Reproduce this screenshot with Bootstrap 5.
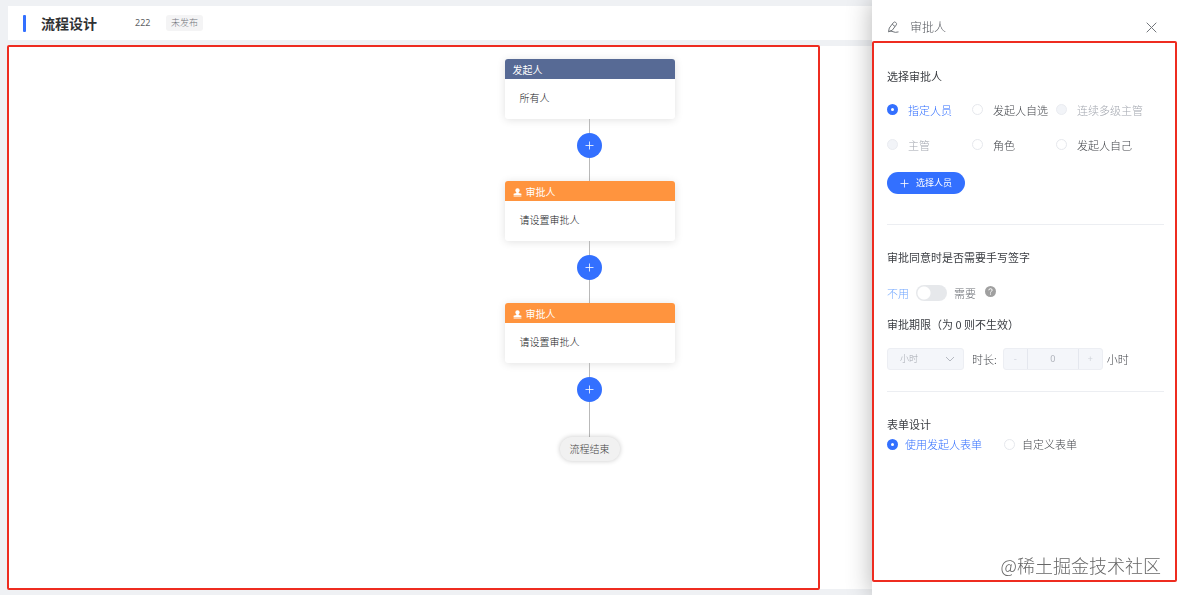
<!DOCTYPE html>
<html lang="zh-CN">
<head>
<meta charset="utf-8">
<meta name="viewport" content="width=device-width, initial-scale=1">
<title>流程设计</title>
<link rel="stylesheet" href="https://cdn.jsdelivr.net/npm/bootstrap@5.3.0/dist/css/bootstrap.min.css">
<style>
  :root { --brand: #3370ff; --mark-red: #ee2c20; }
  body { font-family: "Noto Sans CJK SC", sans-serif; font-size: 11px; line-height: 16px; font-weight: 300; color: #44474c; background: #eff1f4; overflow: hidden; }
  .page { padding: 6px 8px; gap: 6px; }
  .topbar { height: 34px; padding-left: 15px; }
  .topbar-bar { width: 3px; height: 17px; border-radius: 1px; background: var(--brand); margin-right: 15px; }
  .topbar h1 { font-size: 14px; line-height: 18px; font-weight: 700; color: #303133; width: 94px; }
  .topbar-code { font-family: "Noto Sans", sans-serif; font-size: 9px; font-weight: 400; width: 31px; color: #606266; }
  .state-tag { font-size: 9px; line-height: 16px; padding: 0 5px; background: #f4f4f5; color: #73767c; border-radius: 3px; }
  .outline { border: 2px solid var(--mark-red); border-radius: 2px; }
  .canvas-outline { inset: -1px 351px -1px -1px; pointer-events: none; }
  .canvas { padding-top: 13px; }

  .node { width: 170px; background: #fff; border-radius: 3px; box-shadow: 0 1px 8px rgba(0,0,0,.12); font-size: 10px; color: #17191c; }
  .node-head { height: 20px; padding: 2px 8px 0; gap: 4px; color: #fff; font-weight: 400; background: #ff943e; border-radius: 3px 3px 0 0; }
  .node-head.start { background: #576a95; }
  .node-body { height: 40px; padding: 0 15px 2px; }
  .wire { height: 62px; padding-top: 14px; background: linear-gradient(#b9b9b9, #b9b9b9) center / 1px 100% no-repeat; }
  .wire-last { height: 74px; }
  .add-btn { width: 25px; height: 25px; background: var(--brand); }
  .end-pill { font-size: 10px; padding: 4px 10px; background: #f1f1f1; color: #444; box-shadow: 0 0 5px rgba(0,0,0,.22); }

  .drawer { width: 307px; background: #fff; box-shadow: 0 0 24px rgba(0,0,0,.3); padding: 0 2px 13px 0; }
  .drawer-head { height: 41px; padding: 13px 20px 0 15px; gap: 10px; font-size: 12px; color: #55585e; }
  .drawer-body { padding: 25px 11px 0 13px; }
  .drawer-body h2 { font-size: 11px; line-height: 16px; font-weight: 400; color: #3a3d42; margin: 0; }
  .rule { border-top: 1px solid #eceef2; opacity: 1; margin: 0 0 24px; }

  .choices { display: grid; grid-template-columns: 85px 84px auto; grid-auto-rows: 35px; margin-top: 8px; }
  .choice { gap: 10px; white-space: nowrap; }
  .choice .form-check-input { width: 11px; height: 11px; margin: 0; border: 1px solid #e6e8ed; flex: none; box-shadow: none; }
  .choice .form-check-input:checked { border: 4px solid var(--brand); background: #fff; }
  .choice .form-check-input:disabled { background: #f2f4f8; border-color: #eaecf1; opacity: 1; }
  .choice .form-check-input:checked + label { color: var(--brand); }
  .choice .form-check-input:disabled + label { color: #a4a8b0; opacity: 1; }
  .pick-btn { width: 78px; height: 22px; gap: 7px; font-size: 9px; font-weight: 400; color: #fff; background: var(--brand); margin: 10px 0 30px; }

  .sign-row { gap: 7px; margin: 20px 0 15px; color: #6c6f75; }
  .sign-row .off { color: #72a8ff; }
  .sign-row .form-check-input { width: 31px; height: 16px; margin: 0; border: 0; border-radius: 8px; background: radial-gradient(circle at 8px 8px, #fff 6px, #e6e8eb 7px); }
  .limit-row { margin: 16px 0 21px; }
  .unit { width: 77px; height: 22px; padding: 0 12px; font-size: 9px; line-height: 20px; font-weight: 300; border: 1px solid #eceef3; border-radius: 3px;
    --bs-form-select-bg-img: url("data:image/svg+xml,%3Csvg xmlns='http://www.w3.org/2000/svg' viewBox='0 0 10 10' fill='none' stroke='%23b4b8c0'%3E%3Cpath d='M1 3l4 4 4-4'/%3E%3C/svg%3E");
    background-position: right 8px center; background-size: 10px 10px; }
  .unit:disabled { background-color: #f4f6fa; color: #a4a8b0; opacity: 1; }
  .stepper { width: 100px; height: 22px; border: 1px solid #eceef3; border-radius: 3px; background: #f4f6fa; margin: 0 4px 0 6px; }
  .stepper button { width: 23px; flex: none; font-size: 9px; color: #cfd3da; background: none; border: 0; }
  .stepper input { min-width: 0; width: 0; font-family: "Noto Sans", sans-serif; font-size: 9px; font-weight: 400; color: #b0b4bc; background: none; border: solid #e4e7ee; border-width: 0 1px; }
  .form-row { gap: 22px; margin-top: 4px; }
  .form-row .choice { gap: 7px; }
  .credit { right: 14px; bottom: 2px; font-size: 18px; line-height: 26px; color: #666; white-space: nowrap; }
</style>
</head>
<body>
<main class="page vh-100 d-flex flex-column">
  <header class="topbar bg-white d-flex align-items-center flex-shrink-0">
    <span class="topbar-bar"></span>
    <h1 class="mb-0">流程设计</h1>
    <span class="topbar-code">222</span>
    <span class="state-tag">未发布</span>
  </header>

  <section class="canvas bg-white flex-grow-1 position-relative d-flex flex-column align-items-center">
    <div class="canvas-outline outline position-absolute"></div>

    <article class="node">
      <div class="node-head start d-flex align-items-center">发起人</div>
      <div class="node-body d-flex align-items-center">所有人</div>
    </article>
    <div class="wire">
      <button type="button" class="add-btn btn rounded-circle p-0 border-0 d-flex align-items-center justify-content-center" aria-label="添加节点">
        <svg width="9" height="9" viewBox="0 0 9 9" stroke="#fff" stroke-width=".8"><path d="M4.5 .5v8M.5 4.500h8"/></svg>
      </button>
    </div>

    <article class="node">
      <div class="node-head d-flex align-items-center">
        <svg width="9" height="9" viewBox="0 0 9 9" fill="#fff"><path d="M4.500 .3a2.200 2.200 0 0 1 2.200 2.200C6.700 3.700 5.600 4 5.600 5L8.400 5.800V7H.600V5.800L3.400 5C3.400 4 2.300 3.700 2.300 2.500A2.200 2.200 0 0 1 4.500 .3zM.600 7.600H8.400V8.400H.600z"/></svg>
        审批人
      </div>
      <div class="node-body d-flex align-items-center">请设置审批人</div>
    </article>
    <div class="wire">
      <button type="button" class="add-btn btn rounded-circle p-0 border-0 d-flex align-items-center justify-content-center" aria-label="添加节点">
        <svg width="9" height="9" viewBox="0 0 9 9" stroke="#fff" stroke-width=".8"><path d="M4.5 .5v8M.5 4.500h8"/></svg>
      </button>
    </div>

    <article class="node">
      <div class="node-head d-flex align-items-center">
        <svg width="9" height="9" viewBox="0 0 9 9" fill="#fff"><path d="M4.500 .3a2.200 2.200 0 0 1 2.200 2.200C6.700 3.700 5.600 4 5.600 5L8.400 5.800V7H.600V5.800L3.400 5C3.400 4 2.300 3.700 2.300 2.500A2.200 2.200 0 0 1 4.500 .3zM.600 7.600H8.400V8.400H.600z"/></svg>
        审批人
      </div>
      <div class="node-body d-flex align-items-center">请设置审批人</div>
    </article>
    <div class="wire wire-last">
      <button type="button" class="add-btn btn rounded-circle p-0 border-0 d-flex align-items-center justify-content-center" aria-label="添加节点">
        <svg width="9" height="9" viewBox="0 0 9 9" stroke="#fff" stroke-width=".8"><path d="M4.5 .5v8M.5 4.500h8"/></svg>
      </button>
    </div>
    <div class="end-pill rounded-pill">流程结束</div>
  </section>
</main>

<aside class="drawer position-fixed top-0 end-0 vh-100 d-flex flex-column">
  <div class="drawer-head d-flex align-items-center">
    <svg width="13" height="12" viewBox="0 0 13 12" fill="none" stroke="#72767b" stroke-linejoin="round"><path d="M2.300 7 6.300 1.700Q7.300 .400 8.700 1.400T9.300 3.900L5.200 9.300 1.500 10.700zM5.200 3.200 8 5.500M1.500 10.700Q4 9.500 6 10.700T11.500 10.900"/></svg>
    <span class="flex-grow-1">审批人</span>
    <button type="button" class="btn p-0 border-0 d-flex" aria-label="关闭">
      <svg width="11" height="11" viewBox="0 0 11 11" stroke="#72767b"><path d="M.7.7l9.600 9.600M10.300.7L.7 10.300"/></svg>
    </button>
  </div>

  <form class="drawer-body outline flex-grow-1 position-relative">
    <h2>选择审批人</h2>
    <div class="choices">
      <div class="choice d-flex align-items-center"><input class="form-check-input" type="radio" name="who" id="w1" checked><label for="w1">指定人员</label></div>
      <div class="choice d-flex align-items-center"><input class="form-check-input" type="radio" name="who" id="w2"><label for="w2">发起人自选</label></div>
      <div class="choice d-flex align-items-center"><input class="form-check-input" type="radio" name="who" id="w3" disabled><label for="w3">连续多级主管</label></div>
      <div class="choice d-flex align-items-center"><input class="form-check-input" type="radio" name="who" id="w4" disabled><label for="w4">主管</label></div>
      <div class="choice d-flex align-items-center"><input class="form-check-input" type="radio" name="who" id="w5"><label for="w5">角色</label></div>
      <div class="choice d-flex align-items-center"><input class="form-check-input" type="radio" name="who" id="w6"><label for="w6">发起人自己</label></div>
    </div>
    <button type="button" class="pick-btn btn rounded-pill p-0 border-0 d-flex align-items-center justify-content-center">
      <svg width="9" height="9" viewBox="0 0 9 9" stroke="#fff" stroke-width=".8"><path d="M4.5 .5v8M.5 4.5h8"/></svg>
      选择人员
    </button>
    <hr class="rule">

    <h2>审批同意时是否需要手写签字</h2>
    <div class="sign-row d-flex align-items-center">
      <span class="off">不用</span>
      <input class="form-check-input" type="checkbox" role="switch" id="sign">
      <label for="sign">需要</label>
      <svg class="mb-1" width="13" height="11" viewBox="-2 0 13 11"><circle cx="5.500" cy="5.500" r="5.500" fill="#a0a0a0"/><path d="M3.800 4.300Q3.900 2.700 5.500 2.700T7.200 4.200C7.200 5.300 5.500 5.300 5.500 6.600M5.500 7.500V8.600" fill="none" stroke="#fff"/></svg>
    </div>
    <h2>审批期限（为 0 则不生效）</h2>
    <div class="limit-row d-flex align-items-center">
      <select class="unit form-select" aria-label="期限单位" disabled><option>小时</option></select>
      <label for="hours" class="ms-2">时长:</label>
      <div class="stepper d-flex">
        <button type="button" class="p-0" aria-label="减少" disabled>-</button>
        <input id="hours" class="flex-grow-1 text-center p-0" type="text" value="0" disabled>
        <button type="button" class="p-0" aria-label="增加" disabled>+</button>
      </div>
      <span>小时</span>
    </div>
    <hr class="rule">

    <h2>表单设计</h2>
    <div class="form-row d-flex">
      <div class="choice d-flex align-items-center"><input class="form-check-input" type="radio" name="form" id="f1" checked><label for="f1">使用发起人表单</label></div>
      <div class="choice d-flex align-items-center"><input class="form-check-input" type="radio" name="form" id="f2"><label for="f2">自定义表单</label></div>
    </div>
    <div class="credit position-absolute">@稀土掘金技术社区</div>
  </form>
</aside>
<script src="https://cdn.jsdelivr.net/npm/bootstrap@5.3.0/dist/js/bootstrap.bundle.min.js"></script>
</body>
</html>
